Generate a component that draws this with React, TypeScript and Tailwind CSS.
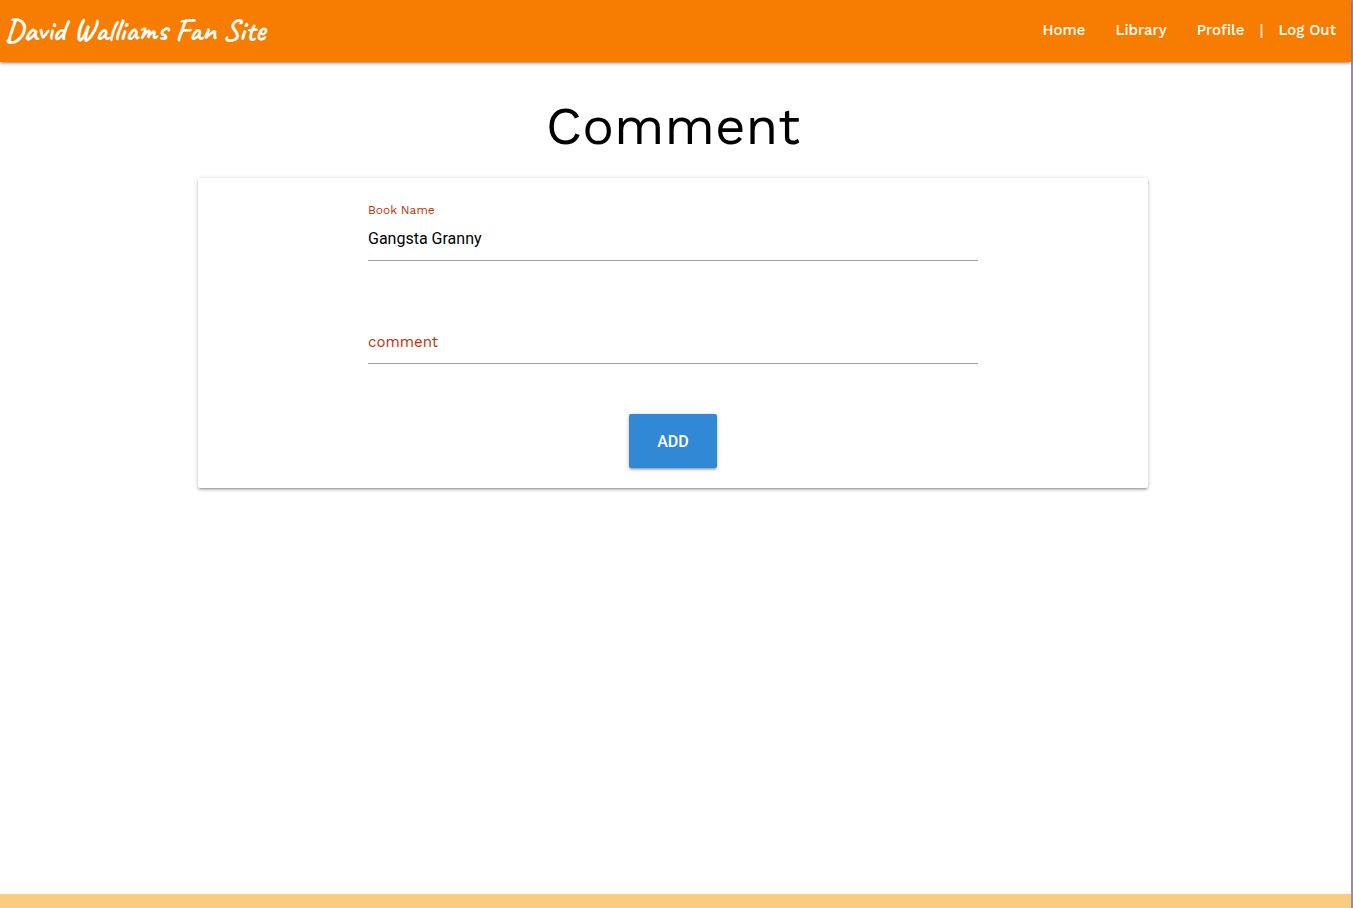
const links = ["Home", "Library", "Profile"];

export default function App() {
  return (
    <div className="flex min-h-screen flex-col border-r-2 border-[#9c8aa4] bg-white font-['Work_Sans','Open_Sans',sans-serif] text-black">
      <header className="flex h-[62px] items-center justify-between bg-[#f77d00] pb-[2px] pl-[5px] text-white shadow-[0_2px_2px_rgba(0,0,0,0.14),0_3px_1px_-2px_rgba(0,0,0,0.12),0_1px_5px_rgba(0,0,0,0.2)]">
        <a href="#" className="font-['Caveat','Caveat_Brush',cursive] text-[31px] leading-10 font-semibold">David Walliams Fan Site</a>
        <nav className="flex items-center text-[15px] font-medium">
          {links.map((l) => (
            <a key={l} href="#" className="px-[15px]">{l}</a>
          ))}
          <span>|</span>
          <a href="#" className="px-[15px]">Log Out</a>
        </nav>
      </header>
      <main className="flex-1 pr-[203px] pl-[198px]">
        <h1 className="mt-8 text-center text-[53px] leading-[64px]">Comment</h1>
        <form className="mt-5 flex flex-col items-center rounded-[2px] px-[170px] pt-6 pb-5 shadow-[0_2px_2px_rgba(0,0,0,0.14),0_3px_1px_-2px_rgba(0,0,0,0.12),0_1px_5px_rgba(0,0,0,0.2)]">
          <div className="flex w-full flex-col">
            <label htmlFor="book" className="text-xs leading-4 text-[#c43000]">Book Name</label>
            <input id="book" defaultValue="Gangsta Granny" className="h-[43px] border-b border-[#9e9e9e] bg-transparent pb-[2px] font-[Roboto] text-base outline-none" />
          </div>
          <div className="mt-[60px] grid w-full">
            <label htmlFor="comment" className="col-start-1 row-start-1 self-center pb-[2px] text-[15px] leading-5 text-[#c43000]">comment</label>
            <input id="comment" className="col-start-1 row-start-1 h-[43px] border-b border-[#9e9e9e] bg-transparent font-[Roboto] text-base outline-none" />
          </div>
          <button type="button" className="mt-[50px] h-[54px] w-[88px] rounded-[2px] bg-[#3188d4] pt-[2px] font-[Roboto] text-base font-medium text-white shadow-[0_2px_2px_rgba(0,0,0,0.14),0_3px_1px_-2px_rgba(0,0,0,0.12),0_1px_5px_rgba(0,0,0,0.2)]">ADD</button>
        </form>
      </main>
      <footer className="h-[14px] bg-[#facc7f]" />
    </div>
  );
}
